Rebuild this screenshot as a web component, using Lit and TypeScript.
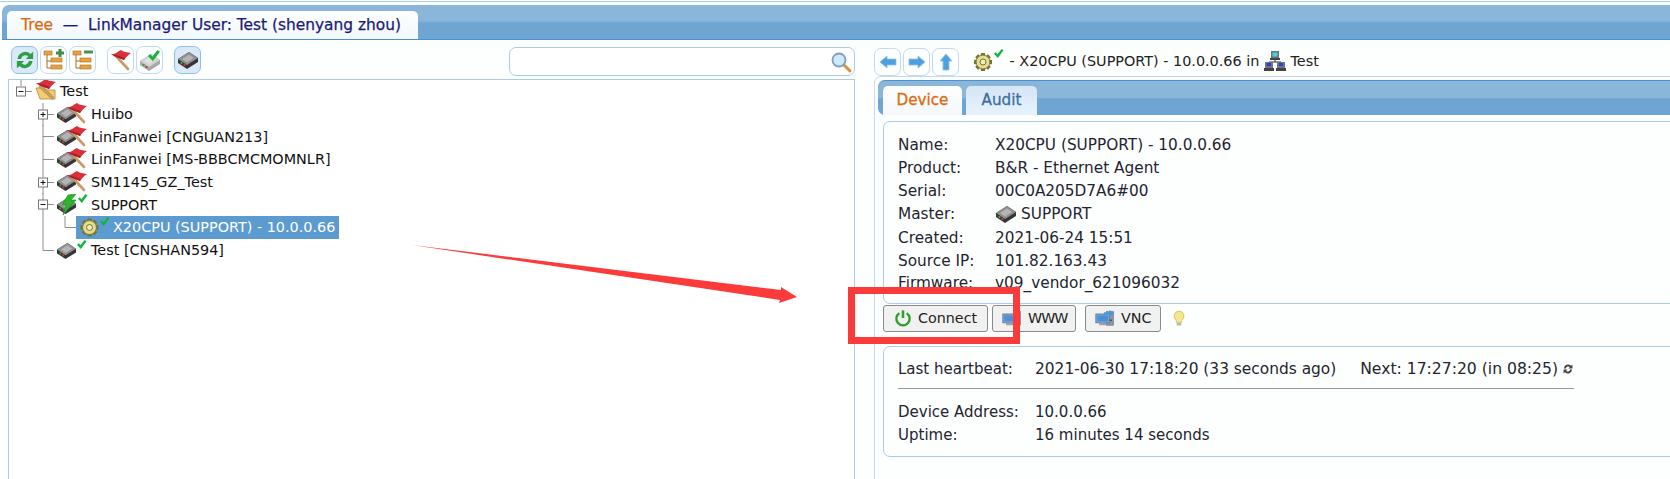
import { LitElement, html, css, svg } from "lit";
import { customElement } from "lit/decorators.js";

// small icon parts, all drawn on a 24 unit box unless noted
const check = (x: number, y: number, s = 1) => svg`
  <path transform="translate(${x} ${y}) scale(${s})" d="M0 5 L2 3.4 L3.6 5.6 L8 0 L10 1.4 L4 9.4 Z" fill="#12b53a"/>`;

const boxShape = (x: number, y: number, s = 1, grey = false) => svg`
  <g transform="translate(${x} ${y}) scale(${s})">
    <path d="M0 8 L11 1 L20 7 L20 11 L9 18 L0 12 Z" fill="${grey ? "#a8a8a8" : "#353535"}"/>
    <path d="M0 8 L11 1 L20 7 L9 14 Z" fill="${grey ? "#d2d2d2" : "#8e8e8e"}"/>
    <path d="M4 8 L11 3.5 L16 7 L9 11.5 Z" fill="${grey ? "#e2e2e2" : "#b4b4b4"}"/>
    <rect x="2.5" y="11" width="2" height="2" fill="#2fa640"/>
    <rect x="5.5" y="13" width="2" height="2" fill="#d8322c"/>
  </g>`;

const flagShape = (x: number, y: number, s = 1) => svg`
  <g transform="translate(${x} ${y}) scale(${s})">
    <path d="M4 5 L17 19" stroke="#c99a63" stroke-width="2.6" stroke-linecap="round"/>
    <path d="M0 4 C3 5 5 3 8 1 L10 0 C12 2 16 2 20 3 C17 5 15 7 13 10 C9 8 4 7 0 4 Z" fill="#d9303a"/>
    <path d="M0 4 C4 7 9 8 13 10 L14 8.5 C10 6 5 5 0 4 Z" fill="#a81f28"/>
  </g>`;

const ic = (w: number, h: number, body: unknown, cls = "") =>
  html`<svg class="ic ${cls}" width=${w} height=${h} viewBox="0 0 ${w} ${h}">${body}</svg>`;

const flagDevice = () => ic(32, 22, svg`${boxShape(1, 3, 0.95)}${flagShape(11, 0)}`);
const okDevice = () => ic(32, 22, svg`${boxShape(1, 3, 0.95)}${check(21, 1, 0.95)}`);
const boltDevice = () =>
  ic(32, 22, svg`${boxShape(1, 3, 0.95)}
    <path d="M12 1 L20 0 L15 6 L20 6 L7 21 L10 11 L6 11 Z" fill="#2cb52c" stroke="#128a1e" stroke-width=".6"/>
    ${check(22, 0, 0.95)}`);

const gear = (x: number, y: number, r = 9) => {
  const teeth = [0, 45, 90, 135];
  return svg`<g transform="translate(${x} ${y}) scale(${r / 9})">
    ${teeth.map(a => svg`<rect x="-2.2" y="-9" width="4.4" height="18" rx=".8" fill="#77722c" transform="rotate(${a})"/>`)}
    <circle r="6.9" fill="#e2dc94" stroke="#77722c" stroke-width=".8"/>
    <circle r="3" fill="#f1edb4" stroke="#6b6728" stroke-width=".9"/>
  </g>`;
};

const rootIcon = () =>
  ic(22, 22, svg`
    <path d="M1 8 L9 8 L11 10 L20 10 L20 19 L5 19 Z" fill="#f1cf6c" stroke="#a98a3a" stroke-width=".8"/>
    <path d="M4 6 L18 19" stroke="#c99a63" stroke-width="2.4"/>
    ${flagShape(1, -1, 1)}`);

const netIcon = () =>
  ic(22, 22, svg`
    <path d="M11 8 V12 M5 12 H17" stroke="#333" stroke-width="1"/>
    <rect x="7" y="1" width="8" height="7" fill="#6c7480"/><rect x="8.5" y="2.5" width="5" height="4" fill="#49d3d6"/>
    <rect x="6" y="8" width="10" height="2" fill="#444"/>
    <rect x="1" y="12" width="8" height="6" fill="#6c7480"/><rect x="3" y="13" width="4" height="3" fill="#2742d8"/>
    <rect x="0" y="18" width="10" height="3" fill="#444"/>
    <rect x="13" y="12" width="8" height="6" fill="#6c7480"/><rect x="15" y="13" width="4" height="3" fill="#2742d8"/>
    <rect x="12" y="18" width="10" height="3" fill="#444"/>`);

const syncIcon = (color: string, w = 22) =>
  html`<svg class="ic" width=${w} height=${w} viewBox="0 0 20 20">
    <path d="M3.2 9 A7 7 0 0 1 15 4.6 L17.4 2.4 V9 H10.8 L13 6.8 A4 4 0 0 0 6.4 9 Z" fill=${color}/>
    <path d="M16.8 11 A7 7 0 0 1 5 15.4 L2.6 17.6 V11 H9.2 L7 13.2 A4 4 0 0 0 13.6 11 Z" fill=${color}/>
  </svg>`;

const treeIcon = (sign: "plus" | "minus") => {
  const c = "#e8a33e";
  const e = "#a96f1f";
  return ic(22, 22, svg`
    <path d="M4 6 V19 H8 M4 12 H8" stroke="${e}" stroke-width="1" fill="none"/>
    <rect x="1" y="2" width="8" height="4" fill="${c}" stroke="${e}" stroke-width=".6"/>
    <rect x="8" y="9" width="11" height="4" fill="${c}" stroke="${e}" stroke-width=".6"/>
    <rect x="8" y="16" width="11" height="4" fill="${c}" stroke="${e}" stroke-width=".6"/>
    ${sign === "plus"
      ? svg`<path d="M13 4 H21 M17 0 V8" stroke="#3f8f44" stroke-width="3"/>`
      : svg`<path d="M12 3 H21" stroke="#4d8f52" stroke-width="3"/>`}`);
};

const arrowBtn = (d: string) =>
  html`<button class="tool"><svg class="ic" width="18" height="18" viewBox="0 0 18 18">
    <path d=${d} fill="#4f9fdc" stroke="#8cc3ec" stroke-width=".8"/></svg></button>`;

// connector cell of the tree, 22 wide, one row high
type Cell = "bar" | "tee" | "end" | "open" | "shut" | "root" | "none";
const cell = (kind: Cell) => {
  const line = "#8f8f8f";
  const parts: unknown[] = [];
  if (kind === "bar" || kind === "tee" || kind === "open" || kind === "shut")
    parts.push(svg`<path d="M11 0 V23" stroke=${line}/>`);
  if (kind === "end") parts.push(svg`<path d="M11 0 V11.5" stroke=${line}/>`);
  if (kind === "root") parts.push(svg`<path d="M11 0 V6" stroke=${line}/>`);
  if (kind !== "bar" && kind !== "none") parts.push(svg`<path d="M11 11.5 H22" stroke=${line}/>`);
  if (kind === "open" || kind === "shut" || kind === "root") {
    parts.push(svg`<rect x="6.5" y="7" width="9" height="9" fill="#fff" stroke="#777"/>
      <path d="M8.5 11.5 H13.5" stroke="#111"/>`);
    if (kind === "shut") parts.push(svg`<path d="M11 9 V14" stroke="#111"/>`);
  }
  return html`<svg class="cell" width="22" height="23" viewBox="0 0 22 23">${parts}</svg>`;
};

const nodes: { cells: Cell[]; icon: () => unknown; label: string; selected?: boolean }[] = [
  { cells: ["root"], icon: rootIcon, label: "Test" },
  { cells: ["none", "shut"], icon: flagDevice, label: "Huibo" },
  { cells: ["none", "tee"], icon: flagDevice, label: "LinFanwei [CNGUAN213]" },
  { cells: ["none", "tee"], icon: flagDevice, label: "LinFanwei [MS-BBBCMCMOMNLR]" },
  { cells: ["none", "shut"], icon: flagDevice, label: "SM1145_GZ_Test" },
  { cells: ["none", "open"], icon: boltDevice, label: "SUPPORT" },
  {
    cells: ["none", "bar", "end"],
    icon: () => ic(32, 22, svg`${gear(9.5, 11.5)}${check(20, 1, 0.95)}`),
    label: "X20CPU (SUPPORT) - 10.0.0.66",
    selected: true,
  },
  { cells: ["none", "end"], icon: okDevice, label: "Test [CNSHAN594]" },
];

const infoRows: [string, unknown][] = [
  ["Name:", "X20CPU (SUPPORT) - 10.0.0.66"],
  ["Product:", "B&R - Ethernet Agent"],
  ["Serial:", "00C0A205D7A6#00"],
  ["Master:", html`<span class="master">${ic(22, 20, boxShape(1, 1, 1))}SUPPORT</span>`],
  ["Created:", "2021-06-24 15:51"],
  ["Source IP:", "101.82.163.43"],
  ["Firmware:", "v09_vendor_621096032"],
];

const monitor = (arrow: boolean) =>
  html`<svg class="ic" width="21" height="18" viewBox="0 0 26 22">
    <rect x="14" y="3" width="9" height="17" fill="#8b97a4" stroke="#667" stroke-width=".6"/>
    <rect x="16" y="13" width="5" height="1.4" fill="#333"/>
    <rect x="1" y="6" width="17" height="11" fill="#6fa6dc" stroke="#6b7a8a"/>
    <rect x="3" y="8" width="13" height="7" fill="#4d8fd6"/>
    <rect x="5" y="17" width="9" height="3" fill="#9aa3ab"/>
    ${arrow ? svg`<path d="M11 4 H18 V1 L24 5 L18 9 V6.4 H11 Z" fill="#3f9be0"/>` : ""}
  </svg>`;

@customElement("app-root")
export class AppRoot extends LitElement {
  static styles = css`
    :host {
      display: block;
      position: relative;
      width: 1670px;
      height: 479px;
      overflow: hidden;
      background: #fdfefe;
      color: #222;
      font-family: "DejaVu Sans", Verdana, sans-serif;
      font-size: 14.4px;
    }
    .ic { display: block; flex: none; }
    .shell {
      margin-top: 1px;
      border-top: 1px solid #a9cde6;
      padding-top: 3px;
      height: 474px;
      overflow: hidden;
    }
    .bar {
      display: flex;
      align-items: flex-end;
      height: 35px;
      box-sizing: border-box;
      margin-left: 2px;
      padding-left: 5px;
      border-radius: 7px 0 0 0;
      border-bottom: 1px solid #4a90d2;
      background: linear-gradient(#8ab6da 0 45%, #6ea5d2 55%);
    }
    .title {
      height: 28px;
      width: 411px;
      box-sizing: border-box;
      padding-left: 14px;
      border-radius: 5px 5px 0 0;
      background: linear-gradient(#fdfefe, #f2f8fd);
      color: #1a1a78;
      font-size: 15.4px;
      line-height: 28px;
      white-space: pre;
      -webkit-text-stroke: 0.25px currentColor;
    }
    .title b { font-weight: normal; color: #e0690c; }
    .main {
      display: grid;
      grid-template-columns: 847px 1fr;
      column-gap: 19px;
      padding-left: 8px;
    }
    .toolbar {
      display: flex;
      align-items: flex-start;
      justify-content: space-between;
      height: 39px;
      padding: 6px 0 0 3px;
      box-sizing: border-box;
    }
    .tools { display: flex; }
    .tool {
      display: flex;
      align-items: center;
      justify-content: center;
      width: 27px;
      height: 28px;
      margin-right: 2px;
      padding: 0;
      box-sizing: border-box;
      border: 1px solid #c2daef;
      border-radius: 7px;
      background: #fdfefe;
    }
    .tool.on { background: #d9e9f8; border-color: #93bfe3; }
    .tool.gap { margin-left: 9px; }
    .search {
      display: flex;
      align-items: center;
      justify-content: flex-end;
      width: 346px;
      height: 29px;
      margin-top: 1px;
      padding-right: 2px;
      box-sizing: border-box;
      border: 1px solid #a9cde6;
      border-radius: 7px;
      background: #fff;
    }
    .tree {
      height: 420px;
      box-sizing: border-box;
      border: 1px solid #a9cde6;
      border-bottom: 0;
      background: #fff;
      padding-left: 1px;
    }
    .row {
      display: flex;
      align-items: center;
      height: 22.7px;
      color: #111;
      white-space: nowrap;
    }
    .cell { flex: none; }
    .node { display: flex; align-items: center; height: 22.7px; padding-right: 4px; gap: 3px; }
    .row.root .node { gap: 3px; padding-left: 3px; }
    .row.child .node { padding-left: 2px; }
    .row.sel .node { background: #5c9bcf; color: #fff; padding-left: 4px; gap: 1px; }

    .nav {
      display: flex;
      align-items: flex-start;
      height: 36px;
      padding-top: 8px;
      box-sizing: border-box;
      white-space: pre;
    }
    .path { display: flex; align-items: center; height: 26px; margin-left: 12px; }
    .panel {
      margin-right: -12px;
      height: 410px;
      padding: 3px 0 0 3px;
      box-sizing: border-box;
      border: 1px solid #c2daef;
      border-radius: 7px 0 0 0;
      position: relative;
    }
    .tabs {
      display: flex;
      align-items: flex-end;
      gap: 4px;
      height: 35px;
      box-sizing: border-box;
      padding-left: 5px;
      border-top: 1px solid #4a90d2;
      border-radius: 7px 0 0 7px;
      background: linear-gradient(#8ab6da 0 50%, #6ea5d2 52%);
    }
    .tab {
      width: 71px;
      height: 29px;
      text-align: center;
      line-height: 28px;
      border-radius: 5px 5px 0 0;
      background: linear-gradient(#d5e6f6, #e8f2fc);
      color: #3b6ea6;
      font-size: 15.2px;
      -webkit-text-stroke: 0.3px currentColor;
    }
    .tab.on { width: 79px; background: linear-gradient(#fdfefe, #f4f8fc); color: #e0690c; }
    .box {
      margin: 0 0 0 5px;
      border: 1px solid #a9cde6;
      border-radius: 7px;
      padding: 11px 14px 10px;
      background: #fdfefe;
      color: #1f2530;
      font-size: 15.3px;
    }
    .box.first { margin-top: 6px; padding: 12px 14px 8px; }
    .info {
      display: grid;
      grid-template-columns: 97px 1fr;
      grid-auto-rows: minmax(22.7px, auto);
      align-items: center;
    }
    .master { display: flex; align-items: center; gap: 4px; height: 24.7px; }
    .actions {
      display: flex;
      align-items: center;
      height: 27px;
      margin: 1px 0 14px 5px;
    }
    .btn {
      display: flex;
      align-items: center;
      justify-content: flex-start;
      gap: 5px;
      height: 27px;
      box-sizing: border-box;
      padding: 0 0 0 9px;
      border: 1px solid #8a8a8a;
      border-radius: 3px;
      background: #f1f1f1;
      color: #222;
      font: inherit;
      font-size: 14.3px;
    }
    .btn.power { margin-right: 4px; width: 105px; padding-left: 10px; gap: 6px; }
    .btn.www { margin-right: 9px; width: 84px; letter-spacing: -1px; }
    .btn.vnc { margin-right: 12px; width: 76px; }
    .hb {
      display: flex;
      align-items: center;
      width: 676px;
      height: 31px;
      box-sizing: border-box;
      padding-bottom: 8px;
      border-bottom: 1px solid #999;
      white-space: pre;
      font-size: 15.4px;
    }
    .hb .lbl { width: 137px; font-size: 15px; }
    .hb .next { margin-left: auto; font-size: 15.6px; }
    .hb .ic { margin-left: 4px; }
    .facts {
      display: grid;
      grid-template-columns: 137px 1fr;
      grid-auto-rows: 22.7px;
      align-items: center;
      margin-top: 12px;
      font-size: 15px;
    }
    .overlay {
      position: absolute;
      left: 0;
      top: 0;
      pointer-events: none;
    }
    .mark {
      position: absolute;
      left: 848px;
      top: 287px;
      width: 172px;
      height: 57px;
      box-sizing: border-box;
      border: 7px solid #fb3a3a;
    }
  `;

  render() {
    return html`
      <div class="shell">
        <div class="bar">
          <div class="title"><b>Tree</b>  —  LinkManager User: Test (shenyang zhou)</div>
        </div>
        <div class="main">
          <section>
            <div class="toolbar">
              <div class="tools">
                <button class="tool on">${syncIcon("#2f9e44")}</button>
                <button class="tool">${treeIcon("plus")}</button>
                <button class="tool">${treeIcon("minus")}</button>
                <button class="tool gap">${ic(22, 22, flagShape(1, 1))}</button>
                <button class="tool">${ic(22, 22, svg`${boxShape(1, 4, 1, true)}${check(9, 1, 1.2)}`)}</button>
                <button class="tool on gap">${ic(22, 20, boxShape(1, 1))}</button>
              </div>
              <div class="search">
                <svg class="ic" width="22" height="22" viewBox="0 0 22 22">
                  <path d="M13 13 L20 20" stroke="#d98f3f" stroke-width="3" stroke-linecap="round"/>
                  <circle cx="9" cy="9" r="6.5" fill="#cfe8fa" stroke="#7f9fbd" stroke-width="1.8"/>
                </svg>
              </div>
            </div>
            <div class="tree">
              ${nodes.map((n, i) => html`
                <div class="row ${i === 0 ? "root" : "child"} ${n.selected ? "sel" : ""}">
                  ${n.cells.map((c, k) => cell(k === 0 && i > 0 ? "none" : c))}
                  <span class="node">${n.icon()}<span>${n.label}</span></span>
                </div>`)}
            </div>
          </section>
          <section>
            <div class="nav">
              ${arrowBtn("M1 9 L8 3 V6 H17 V12 H8 V15 Z")}
              ${arrowBtn("M17 9 L10 3 V6 H1 V12 H10 V15 Z")}
              ${arrowBtn("M9 1 L15 8 H12 V17 H6 V8 H3 Z")}
              <div class="path">
                ${ic(32, 24, svg`${gear(10, 13)}${check(21, 0, 0.95)}`)}
                <span> - X20CPU (SUPPORT) - 10.0.0.66 in </span>
                ${netIcon()}
                <span> Test</span>
              </div>
            </div>
            <div class="panel">
              <div class="tabs">
                <div class="tab on">Device</div>
                <div class="tab">Audit</div>
              </div>
              <div class="box first">
                <div class="info">
                  ${infoRows.map(([k, v]) => html`<span>${k}</span><span>${v}</span>`)}
                </div>
              </div>
              <div class="actions">
                <button class="btn power">
                  <svg class="ic" width="18" height="18" viewBox="0 0 20 20">
                    <path d="M6 4.6 A7.4 7.4 0 1 0 14 4.6" fill="none" stroke="#2ca02c" stroke-width="2.6"/>
                    <path d="M10 1.5 V10" stroke="#2ca02c" stroke-width="2.8"/>
                  </svg>
                  Connect
                </button>
                <button class="btn www">${monitor(false)}WWW</button>
                <button class="btn vnc">${monitor(true)}VNC</button>
                <svg class="ic" width="12" height="17" viewBox="0 0 13 18">
                  <path d="M6.5 1 A5.5 5.5 0 0 1 9.5 11 V13 H3.5 V11 A5.5 5.5 0 0 1 6.5 1 Z" fill="#f5e88a" stroke="#cfc06a"/>
                  <rect x="4" y="13.5" width="5" height="3" fill="#b9b9a8"/>
                </svg>
              </div>
              <div class="box">
                <div class="hb">
                  <span class="lbl">Last heartbeat:</span>
                  <span>2021-06-30 17:18:20 (33 seconds ago)</span>
                  <span class="next">Next: 17:27:20 (in 08:25)</span>
                  ${syncIcon("#444", 12)}
                </div>
                <div class="facts">
                  <span>Device Address:</span><span>10.0.0.66</span>
                  <span>Uptime:</span><span>16 minutes 14 seconds</span>
                </div>
              </div>
            </div>
          </section>
        </div>
      </div>
      <svg class="overlay" width="1670" height="479">
        <path d="M412 245 L781 290 L781 287 L797 297 L779 303 L780 300 Z" fill="#fb3a3a"/>
      </svg>
      <div class="mark"></div>
    `;
  }
}
